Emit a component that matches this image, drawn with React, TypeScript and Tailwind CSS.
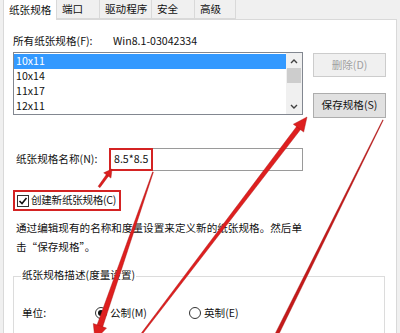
import React from 'react';

type Pt = [number, number];

// polygon for a tapered stroke from a (width wa) to b (width wb)
function taper(a: Pt, b: Pt, wa: number, wb: number) {
  const dx = b[0] - a[0];
  const dy = b[1] - a[1];
  const len = Math.hypot(dx, dy);
  const nx = -dy / len;
  const ny = dx / len;
  const pts: Pt[] = [
    [a[0] + (nx * wa) / 2, a[1] + (ny * wa) / 2],
    [b[0] + (nx * wb) / 2, b[1] + (ny * wb) / 2],
    [b[0] - (nx * wb) / 2, b[1] - (ny * wb) / 2],
    [a[0] - (nx * wa) / 2, a[1] - (ny * wa) / 2],
  ];
  return pts.map((p) => p.join(',')).join(' ');
}

function head(tail: Pt, tip: Pt, len: number, half: number) {
  const dx = tip[0] - tail[0];
  const dy = tip[1] - tail[1];
  const l = Math.hypot(dx, dy);
  const ux = dx / l;
  const uy = dy / l;
  const bx = tip[0] - ux * len;
  const by = tip[1] - uy * len;
  return [tip, [bx - uy * half, by + ux * half], [bx + uy * half, by - ux * half]]
    .map((p) => p.join(','))
    .join(' ');
}

function base(tail: Pt, tip: Pt, len: number): Pt {
  const dx = tip[0] - tail[0];
  const dy = tip[1] - tail[1];
  const l = Math.hypot(dx, dy);
  return [tip[0] - (dx / l) * (len - 2), tip[1] - (dy / l) * (len - 2)];
}

function Arrows() {
  const aTail: Pt = [140, 336];
  const aTip: Pt = [307, 117];
  const bTail: Pt = [153, 172];
  const bTip: Pt = [95, 340];
  const eTail: Pt = [99, 187];
  const eTip: Pt = [112, 169];
  return (
    <svg className="absolute inset-0 pointer-events-none" width="400" height="333" viewBox="0 0 400 333">
      <g fill="#de1f1f" stroke="#a51414" strokeWidth="0.4">
        <polygon points={taper(aTail, base(aTail, aTip, 14), 1.4, 5)} />
        <polygon points={head(aTail, aTip, 14, 6.5)} />
        <polygon points={taper(bTail, base(bTail, bTip, 15), 0.8, 6)} />
        <polygon points={head(bTail, bTip, 15, 7)} />
        <polygon points={taper([383, 120], [276, 336], 0.6, 3.6)} fill="#c41a1a" />
        <polygon points={taper(eTail, base(eTail, eTip, 8), 2.2, 2.6)} />
        <polygon points={head(eTail, eTip, 8, 4.5)} />
      </g>
    </svg>
  );
}

function Caret({ up }: { up?: boolean }) {
  return (
    <svg width="8" height="6" viewBox="0 0 8 6">
      <polyline
        points={up ? '1,5 4,2 7,5' : '1,1 4,4 7,1'}
        fill="none"
        stroke="#404040"
        strokeWidth="1.4"
      />
    </svg>
  );
}

function Radio({ checked }: { checked?: boolean }) {
  return (
    <span className="w-[12px] h-[12px] rounded-full border border-[#333] bg-white flex items-center justify-center">
      {checked && <span className="w-[6px] h-[6px] rounded-full bg-[#111]" />}
    </span>
  );
}

const tabs = ['纸张规格', '端口', '驱动程序', '安全', '高级'];
const tabW = [54, 43, 52, 43, 41];
const items = ['10x11', '10x14', '11x17', '12x11'];

export default function App() {
  return (
    <div
      className="relative w-[400px] h-[333px] overflow-hidden bg-[#f0f0f0] text-[10.6px] text-[#111] leading-none"
      style={{ fontFamily: '"Noto Sans CJK SC", "Noto Sans", sans-serif' }}
    >
      {/* Tabs */}
      <div className="flex h-[19px] pl-[3px]">
        {tabs.map((t, i) => (
          <div
            key={t}
            style={{ width: tabW[i] }}
            className={
              i === 0
                ? 'h-[20px] -mb-px bg-white border-x border-[#d9d9d9] flex items-center pl-[5px] z-10 relative'
                : 'h-[19px] bg-[#f0f0f0] border-r border-b border-[#d9d9d9] flex items-center pl-[5px]'
            }
          >
            {t}
          </div>
        ))}
      </div>

      {/* Panel */}
      <div className="mx-[3px] h-[330px] bg-white border border-[#d9d9d9]">
        <div className="flex items-center mt-[14px] pl-[9px] h-[14px]">
          <span className="w-[100px]">所有纸张规格(F):</span>
          <span>Win8.1-03042334</span>
        </div>

        {/* list + buttons */}
        <div className="flex mt-[4px] pl-[9px]">
          <div className="flex w-[290px] h-[63px] border border-[#828790] bg-white">
            <div className="flex-1 pt-px">
              {items.map((it, i) => (
                <div
                  key={it}
                  className={
                    i === 0
                      ? 'h-[15px] flex items-center pl-[2px] bg-[#3399ff] text-white'
                      : 'h-[15px] flex items-center pl-[2px]'
                  }
                >
                  {it}
                </div>
              ))}
            </div>
            <div className="w-[16px] bg-[#f0f0f0] flex flex-col items-center">
              <div className="h-[15px] flex items-center justify-center">
                <Caret up />
              </div>
              <div className="w-[14px] h-[15px] bg-[#cdcdcd]" />
              <div className="flex-1" />
              <div className="h-[15px] flex items-center justify-center">
                <Caret />
              </div>
            </div>
          </div>
          <div className="ml-[10px] flex flex-col gap-[16px] pt-px">
            <div className="w-[73px] h-[24px] bg-[#f0f0f0] border border-[#cccccc] text-[#a0a0a0] flex items-center justify-center">
              删除(D)
            </div>
            <div className="w-[73px] h-[25px] bg-[#e1e1e1] border border-[#adadad] flex items-center justify-center">
              保存规格(S)
            </div>
          </div>
        </div>

        {/* name */}
        <div className="flex items-center mt-[30px] pl-[12px]">
          <span className="w-[93px]">纸张规格名称(N):</span>
          <div className="w-[194px] h-[23px] border border-[#9a9a9a] bg-white">
            <div className="-m-px w-[44px] h-[23px] border-2 border-[#d42323] flex items-center pl-[3px]">8.5*8.5</div>
          </div>
        </div>

        {/* checkbox */}
        <div className="mt-[19px] ml-[9px] w-[108px] h-[21px] border-2 border-[#d42323] flex items-center pl-[2px] gap-[2px] whitespace-nowrap">
          <span className="shrink-0 w-[12px] h-[12px] border border-[#333] bg-white flex items-center justify-center">
            <svg width="10" height="10" viewBox="0 0 10 10">
              <polyline points="1.5,5 4,7.5 8.5,2" fill="none" stroke="#111" strokeWidth="1.6" />
            </svg>
          </span>
          <span className="tracking-[-0.3px]">创建新纸张规格(C)</span>
        </div>

        {/* description */}
        <div className="mt-[7px] pl-[12px] leading-[19px]">
          <div>通过编辑现有的名称和度量设置来定义新的纸张规格。然后单</div>
          <div>击“保存规格”。</div>
        </div>

        {/* group */}
        <div className="relative mt-[20px] ml-[9px] w-[372px] h-[80px] border border-[#dcdcdc]">
          <span className="absolute -top-[7px] left-[7px] bg-white px-px">纸张规格描述(度量设置)</span>
          <div className="flex items-center mt-[29px] pl-[8px] h-[14px]">
            <span className="w-[73px]">单位:</span>
            <Radio checked />
            <span className="ml-[3px] w-[79px]">公制(M)</span>
            <Radio />
            <span className="ml-[3px]">英制(E)</span>
          </div>
          <div className="flex items-center mt-[12px] pl-[8px] h-[14px]">
            <span className="w-[117px]">纸张大小:</span>
            <span>打印机区域边距</span>
          </div>
        </div>
      </div>

      <Arrows />
    </div>
  );
}
